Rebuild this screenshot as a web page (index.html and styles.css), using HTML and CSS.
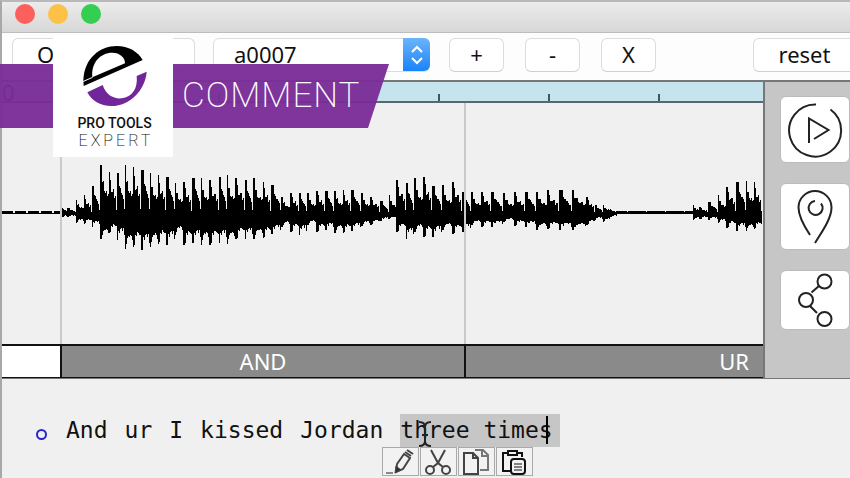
FILE: index.html
```html
<!DOCTYPE html>
<html lang="en">
<head>
    <meta charset="UTF-8">
    <meta name="viewport" content="width=device-width, initial-scale=1.0">
    <title>Pro Tools Expert - Comment</title>
    <link rel="stylesheet" href="styles.css">
</head>
<body>

    <div class="window">
        <!-- Title bar -->
        <header class="titlebar">
            <span class="light red"></span>
            <span class="light yellow"></span>
            <span class="light green"></span>
        </header>

        <!-- Toolbar -->
        <div class="toolbar">
            <button class="btn open">O</button>
            <div class="picker">
                <select aria-label="Clip">
                    <option>a0007</option>
                </select>
                <span class="stepper">
                    <svg width="14" height="22" viewBox="0 0 14 22"><path d="M2 8l5-5 5 5M2 14l5 5 5-5"/></svg>
                </span>
            </div>
            <div class="small-buttons">
                <button class="btn">+</button>
                <button class="btn">-</button>
                <button class="btn">X</button>
            </div>
            <button class="btn reset">reset</button>
        </div>

        <!-- Editor -->
        <main class="editor">
            <section class="track">
                <div class="ruler">
                    <span>0</span>
                </div>
                <svg class="wave" viewBox="0 0 761 241" preserveAspectRatio="none">
                    <path id="wave-path"/>
                    <path class="marker" d="M59 0V241M463 0V241"/>
                </svg>
                <div class="words">
                    <div class="word blank"></div>
                    <div class="word and">AND</div>
                    <div class="word ur">UR</div>
                </div>
            </section>

            <aside class="side">
                <button class="tool" aria-label="Play">
                    <svg width="56" height="56" viewBox="0 0 56 56"><path d="M43.500 7.500A26 26 0 1 1 29 2.500M22 41V16.500L41.500 28L27 37"/></svg>
                </button>
                <button class="tool" aria-label="Marker">
                    <svg width="56" height="56" viewBox="0 0 56 56"><path d="M23 46C17 37 11.500 27 11.500 18.500A16.500 16.500 0 0 1 44.500 18.500C44.500 30 34 44 28 54"/><path d="M34 14.500A7 7 0 1 1 28 12"/></svg>
                </button>
                <button class="tool short" aria-label="Share">
                    <svg width="56" height="56" viewBox="0 0 56 56"><circle cx="37.500" cy="9.500" r="7"/><circle cx="19" cy="28" r="7"/><circle cx="37.500" cy="47" r="7"/><path d="M24.500 20.500L32.500 13.500M23 34L30 41"/></svg>
                </button>
            </aside>
        </main>

        <!-- Transcript -->
        <section class="transcript">
            <span class="bullet"></span>
            <span>And</span>
            <span>ur</span>
            <span>I</span>
            <span>kissed</span>
            <span>Jordan</span>
            <span class="selected">three times
                <i class="caret"></i>
                <svg class="ibeam" width="14" height="26" viewBox="0 0 14 26"><path d="M1 1Q7 1 7 6V20Q7 25 1 25M13 1Q7 1 7 6M7 20Q7 25 13 25M4 14H10"/></svg>
                <span class="popup">
                    <button aria-label="Edit">
                        <svg width="30" height="26" viewBox="0 0 30 26"><path d="M1 24H8" stroke="#888" stroke-width="2"/><path d="M12 15L19 5L25 9L18 20L11 23Z" stroke-width="2"/><path d="M20 3L26 7M22 1L28 5" stroke-width="2"/><path d="M11 17L16 21L10 24Z" fill="#333"/></svg>
                    </button>
                    <button aria-label="Cut">
                        <svg width="30" height="26" viewBox="0 0 30 26"><path d="M8 1L15 14L20 18M22 1L15 14L10 18" stroke-width="2"/><circle cx="7" cy="21" r="4" stroke-width="2"/><circle cx="23" cy="21" r="4" stroke-width="2"/></svg>
                    </button>
                    <button aria-label="Copy">
                        <svg width="30" height="26" viewBox="0 0 30 26"><path d="M3 4H12L17 9V25H3ZM12 4V9H17" stroke-width="2"/><path d="M14 1H22L27 6V21H19M21 1V7H27" stroke="#777" stroke-width="2"/></svg>
                    </button>
                    <button aria-label="Paste">
                        <svg class="bold" width="30" height="26" viewBox="0 0 30 26"><path d="M11 22H4V4H9M18 4H23V8"/><path d="M9 2H18V6H9Z"/><rect x="12" y="10" width="14" height="15" rx="3"/><path d="M15 15H23M15 18H23M15 21H23" stroke-width="1"/></svg>
                    </button>
                </span>
            </span>
        </section>
    </div>

    <!-- Brand banner -->
    <div class="banner">
        <div class="ribbon">COMMENT</div>
        <div class="brand">
            <svg width="64" height="62" viewBox="99 30 192 186">
                <path d="M100 136C102 70 150 33 200 33C235 33 264 50 278 75L101 153Z"/>
                <path fill="#fff" d="M127 127C122 85 150 53 187 53C210 53 225 68 225 85Z"/>
                <path stroke="#fff" stroke-width="3" d="M98 140L128 127"/>
                <path fill="#71269a" d="M112 172L158 150C168 180 190 192 215 190C247 186 264 160 260 123L290 110C286 165 240 213 185 213C150 213 125 197 112 172Z"/>
            </svg>
            <strong>PRO TOOLS</strong>
            <span>EXPERT</span>
        </div>
    </div>

    <script src="wave.js"></script>
</body>
</html>
```

FILE: styles.css
```css
* {
    box-sizing: border-box;
}

body {
    margin: 0;
    background: #f0f0f0;
    color: #111;
    font-family: "Noto Sans", "Open Sans", sans-serif;
    font-size: 22px;
    overflow: hidden;
}

button,
select {
    font: inherit;
    color: inherit;
    margin: 0;
}

svg {
    display: block;
    fill: none;
}

.window {
    min-height: 100vh;
    border-top: 2px solid #b9b9b9;
    border-left: 2px solid #a8a8a8;
}

.titlebar {
    display: flex;
    gap: 13px;
    height: 31px;
    padding: 2px 13px;
    background: linear-gradient(#ececec, #d7d7d7);
    border-bottom: 1px solid #bdbdbd;
    border-top-left-radius: 5px;
}

.light {
    width: 20px;
    height: 20px;
    border-radius: 50%;
}

.red {
    background: #fc605c;
}

.yellow {
    background: #fdc148;
}

.green {
    background: #34ce50;
}

/* Toolbar */
.toolbar {
    display: flex;
    height: 47px;
    padding: 5px 0 0 10px;
    background: #fdfdfd;
}

.btn {
    width: 55px;
    height: 34px;
    padding: 0 0 2px;
    line-height: 30px;
    background: #fff;
    border: 1px solid #dcdcdc;
    border-bottom-color: #cfcfcf;
    border-radius: 6px;
}

.open {
    width: 183px;
    padding-left: 24px;
    text-align: left;
}

.picker {
    position: relative;
    width: 217px;
    height: 34px;
    margin-left: 18px;
}

.picker select {
    appearance: none;
    width: 100%;
    height: 34px;
    padding: 0 20px 2px;
    line-height: 30px;
    background: #fff;
    border: 1px solid #dcdcdc;
    border-radius: 6px;
}

.stepper {
    position: absolute;
    top: 0;
    right: 0;
    display: flex;
    align-items: center;
    justify-content: center;
    width: 27px;
    height: 33px;
    background: linear-gradient(#6bb4fa, #1a83fb);
    border-radius: 0 6px 6px 0;
    pointer-events: none;
}

.stepper path {
    stroke: #fff;
    stroke-width: 2;
}

.small-buttons {
    display: flex;
    gap: 21px;
    margin-left: 19px;
}

.reset {
    width: 103px;
    margin: 0 -6px 0 auto;
}

/* Editor */
.editor {
    display: flex;
    border-top: 2px solid #777;
    border-bottom: 1px solid #777;
}

.track {
    flex: 1;
    min-width: 0;
}

.ruler {
    height: 21px;
    line-height: 20px;
    background: repeating-linear-gradient(90deg, transparent 0 106px, #456 106px 108px, transparent 108px 110px) 0 100% / 100% 7px no-repeat #c5e4ed;
    border-bottom: 2px solid #566970;
}

.wave {
    width: 100%;
    height: 241px;
}

#wave-path {
    fill: #000;
}

.marker {
    stroke: #cacaca;
    stroke-width: 2;
}

.words {
    display: flex;
    height: 34px;
    border-top: 2px solid #111;
    border-bottom: 1px solid #111;
    background: #8a8a8a;
    color: #fff;
    line-height: 31px;
    text-align: center;
}

.blank {
    width: 58px;
    background: #fff;
}

.and {
    width: 406px;
    border: 2px solid #111;
    border-width: 0 2px;
}

.ur {
    flex: 1;
    padding-right: 14px;
    text-align: right;
}

.side {
    display: flex;
    flex-direction: column;
    gap: 20px;
    width: 87px;
    padding: 14px 0 0 15px;
    background: #c6c6c6;
    border-left: 2px solid #777;
}

.tool {
    display: flex;
    align-items: center;
    justify-content: center;
    height: 67px;
    padding: 0;
    background: #fff;
    border: 1px solid #bbb;
    border-radius: 6px;
}

.tool path,
.tool circle {
    stroke: #222;
    stroke-width: 2;
}

.short {
    height: 60px;
}

/* Transcript */
.transcript {
    display: flex;
    gap: 17px;
    padding: 35px 0 0 34px;
    font-family: "DejaVu Sans Mono", monospace;
    font-size: 23px;
    line-height: 33px;
}

.bullet {
    width: 11px;
    height: 11px;
    margin: 15px 2px 0 0;
    border: 2px solid #2727c8;
    border-radius: 50%;
}

.selected {
    position: relative;
    padding-right: 7px;
    background: #c6c6c6;
}

.caret {
    position: absolute;
    top: 2px;
    right: 12px;
    width: 2px;
    height: 28px;
    background: #000;
}

.ibeam {
    position: absolute;
    top: 7px;
    left: 18px;
    stroke: #222;
    stroke-width: 2;
}

.popup {
    position: absolute;
    top: 33px;
    left: -18px;
    display: flex;
    gap: 1px;
}

.popup button {
    width: 37px;
    height: 29px;
    padding: 0 2px;
    background: #f2f2f2;
    border: 1px solid #a9a9a9;
}

.popup svg {
    stroke: #444;
}

.popup .bold {
    stroke: #111;
    stroke-width: 2;
}

/* Banner */
.banner {
    position: absolute;
    top: 37px;
    left: 0;
    width: 389px;
}

.ribbon {
    height: 64px;
    margin-top: 27px;
    padding-left: 182px;
    background: rgba(122, 45, 151, 0.96);
    clip-path: polygon(0 0, 100% 0, 368px 100%, 0 100%);
    color: #fff;
    font-family: Roboto, sans-serif;
    font-size: 35px;
    font-weight: 200;
    letter-spacing: 1px;
    line-height: 64px;
}

.brand {
    position: absolute;
    top: 0;
    left: 53px;
    display: flex;
    flex-direction: column;
    align-items: center;
    width: 120px;
    height: 120px;
    padding: 8px 0 0 3px;
    background: #fff;
    font-family: Roboto, sans-serif;
}

.brand path {
    fill: #000;
}

.brand path[fill="#fff"] {
    fill: #fff;
}

.brand path[fill="#71269a"] {
    fill: #71269a;
}

.brand strong {
    margin-top: 8px;
    font-size: 14px;
    font-weight: 500;
    line-height: 17px;
}

.brand span {
    padding-left: 3px;
    font-size: 16px;
    font-weight: 200;
    letter-spacing: 3px;
    line-height: 17px;
}
```

FILE: wave.js
```javascript
// x, height above and height below the centre line for every pitch pulse
const peaks = [
    [62, 5, 4], [67, 5, 4], [76, 13, 10], [84, 18, 11], [92, 27, 14], [100, 48, 26], [109, 41, 20], [117, 40, 27],
    [125, 48, 36], [133, 46, 34], [141, 43, 37], [150, 40, 34], [158, 38, 31], [166, 36, 32], [175, 30, 22],
    [183, 31, 32], [192, 35, 30], [201, 35, 32], [209, 33, 32], [219, 36, 30], [227, 38, 31], [235, 35, 26],
    [245, 33, 26], [253, 35, 26], [263, 31, 25], [271, 28, 21], [281, 16, 14], [290, 20, 19], [299, 20, 22],
    [307, 20, 12], [316, 22, 19], [325, 22, 17], [334, 22, 20], [343, 23, 20], [351, 23, 18], [361, 20, 13],
    [370, 16, 12], [380, 12, 8], [389, 18, 6], [396, 33, 19], [406, 30, 26], [414, 35, 19], [423, 36, 24],
    [432, 27, 24], [442, 28, 17], [452, 31, 21], [462, 21, 19], [471, 21, 12], [481, 21, 14], [491, 21, 14],
    [503, 20, 9], [514, 21, 13], [525, 21, 14], [536, 21, 17], [547, 23, 16], [559, 23, 17], [572, 23, 17],
    [586, 16, 12], [595, 8, 7], [603, 8, 9], [610, 4, 4], [617, 1, 1], [693, 8, 7], [699, 6, 6], [708, 11, 7],
    [718, 18, 10], [726, 26, 15], [736, 31, 18], [746, 32, 18], [754, 31, 16], [762, 8, 8]
];

// how a pulse decays, alternating so that the outline stays uneven
const upShapes = [
    [1, 0.8, 0.5, 0.52, 0.58, 0.36, 0.42, 0.08],
    [1, 1, 0.68, 0.62, 0.5, 0.44, 0.34, 0.1],
    [1, 0.65, 0.66, 0.46, 0.42, 0.46, 0.36, 0.4]
];
const downShapes = [
    [1, 0.85, 0.7, 0.64, 0.66, 0.6, 0.64, 0.75],
    [1, 0.95, 0.64, 0.68, 0.56, 0.6, 0.64, 0.66],
    [1, 0.66, 0.74, 0.6, 0.56, 0.66, 0.56, 0.8]
];
const centre = 110;

function column(x, up, down) {
    return `M${x - 2} ${centre - up}h1V${centre + down}h-1Z`;
}

function drawWave() {
    let d = "";
    // room tone before the first word
    for (let x = 2; x < 62; x++) {
        d += column(x, x % 13 < 2 ? 0 : 2, 1);
    }
    for (let i = 0; i < peaks.length - 1; i++) {
        const [x0, up, down] = peaks[i];
        const x1 = peaks[i + 1][0];
        const upShape = upShapes[i % 3];
        const downShape = downShapes[(i + 1) % 3];
        for (let x = x0; x < x1; x++) {
            // silence between the two phrases stays flat
            if (x0 === 617) {
                d += column(x, x % 19 === 0 ? 1 : 2, 1);
                continue;
            }
            const step = Math.floor((x - x0) / (x1 - x0) * 8);
            d += column(x, Math.max(1, Math.round(up * upShape[step])), Math.max(2, Math.round(down * downShape[step])));
        }
    }
    document.getElementById("wave-path").setAttribute("d", d);
}

drawWave();
```
